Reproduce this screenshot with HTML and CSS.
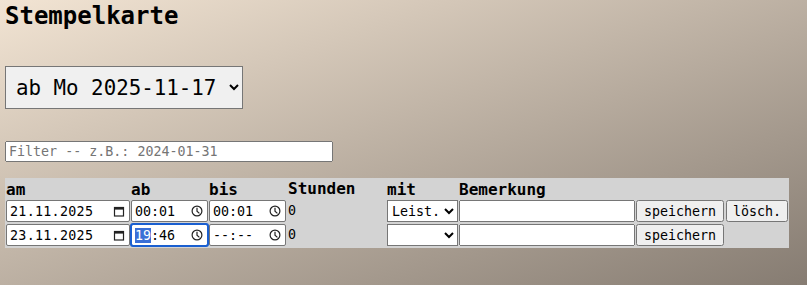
FILE: index.html
```html
<!DOCTYPE html>
<html lang="de">
<head>
    <meta charset="UTF-8">
    <meta name="viewport" content="width=device-width, initial-scale=1.0">
    <title>Stempelkarte</title>
    <link rel="stylesheet" href="styles.css">
</head>
<body>
    <h1>Stempelkarte</h1>
    <select class="woche">
        <option>ab Mo 2025-11-17</option>
    </select>
    <div class="filter">
        <input type="text" class="filter-input" placeholder="Filter -- z.B.: 2024-01-31">
    </div>
    <table class="stempel">
        <tr>
            <th>am</th>
            <th>ab</th>
            <th>bis</th>
            <th class="stunden">Stunden</th>
            <th>mit</th>
            <th>Bemerkung</th>
            <th></th>
            <th class="last"></th>
        </tr>
        <tr>
            <td>
                <span class="field datum">
                    <span class="wert">21.11.2025</span>
                    <svg class="icon" viewBox="0 0 12 12"><rect x="1.5" y="2.5" width="9" height="8.5" fill="none" stroke="#222" stroke-width="1.2"/><rect x="1" y="2" width="10" height="2.6" fill="#222"/></svg>
                </span>
            </td>
            <td>
                <span class="field zeit">
                    <span class="wert">00:01</span>
                    <svg class="icon" viewBox="0 0 12 12"><circle cx="6" cy="6" r="4.9" fill="none" stroke="#222" stroke-width="1.2"/><path d="M6 2.8V6.3L8.4 8.4" fill="none" stroke="#222" stroke-width="1.2"/></svg>
                </span>
            </td>
            <td>
                <span class="field zeit">
                    <span class="wert">00:01</span>
                    <svg class="icon" viewBox="0 0 12 12"><circle cx="6" cy="6" r="4.9" fill="none" stroke="#222" stroke-width="1.2"/><path d="M6 2.8V6.3L8.4 8.4" fill="none" stroke="#222" stroke-width="1.2"/></svg>
                </span>
            </td>
            <td class="stunden">0</td>
            <td><select class="mit"><option>Leist.</option></select></td>
            <td><input type="text" class="bemerkung"></td>
            <td><button>speichern</button></td>
            <td class="last"><button class="loesch">lösch.</button></td>
        </tr>
        <tr>
            <td>
                <span class="field datum">
                    <span class="wert">23.11.2025</span>
                    <svg class="icon" viewBox="0 0 12 12"><rect x="1.5" y="2.5" width="9" height="8.5" fill="none" stroke="#222" stroke-width="1.2"/><rect x="1" y="2" width="10" height="2.6" fill="#222"/></svg>
                </span>
            </td>
            <td>
                <span class="field zeit aktiv">
                    <span class="wert"><span class="markiert">19</span>:46</span>
                    <svg class="icon" viewBox="0 0 12 12"><circle cx="6" cy="6" r="4.9" fill="none" stroke="#222" stroke-width="1.2"/><path d="M6 2.8V6.3L8.4 8.4" fill="none" stroke="#222" stroke-width="1.2"/></svg>
                </span>
            </td>
            <td>
                <span class="field zeit">
                    <span class="wert">--:--</span>
                    <svg class="icon" viewBox="0 0 12 12"><circle cx="6" cy="6" r="4.9" fill="none" stroke="#222" stroke-width="1.2"/><path d="M6 2.8V6.3L8.4 8.4" fill="none" stroke="#222" stroke-width="1.2"/></svg>
                </span>
            </td>
            <td class="stunden">0</td>
            <td><select class="mit"><option></option><option>Leist.</option></select></td>
            <td><input type="text" class="bemerkung"></td>
            <td><button>speichern</button></td>
            <td class="last"></td>
        </tr>
    </table>
</body>
</html>
```

FILE: styles.css
```css
/* Seite */
html {
    min-height: 100%;
    background: linear-gradient(to bottom right, #f2e4d3, #867c72);
}

body {
    margin: 0;
    padding: 0 5px;
    font-family: 'DejaVu Sans Mono', monospace;
    color: black;
}

h1 {
    font-size: 24px;
    margin: 0;
    padding-top: 4px;
    line-height: 24px;
}

input, select, button {
    font-family: 'DejaVu Sans Mono', monospace;
    font-size: 13.333px;
}

.woche {
    margin-top: 38px;
    font-size: 20.8px;
    padding: 7px 9px 7px 6px;
    height: 43px;
    background-color: #f0f0f0;
    border: 1px solid #767676;
}

.filter {
    margin-top: 32px;
}

.filter-input {
    width: 328px;
    box-sizing: border-box;
    margin: 0;
}

/* Tabelle */
.stempel {
    margin-top: 16px;
    border-collapse: separate;
    border-spacing: 0;
    background-color: lightgray;
}

.stempel th {
    text-align: left;
    font-size: 16px;
    padding: 0 0 0 1px;
    height: 21px;
    line-height: 21px;
}

.stempel td {
    padding: 0 0 2px 1px;
    font-size: 13.333px;
    vertical-align: top;
}

.stempel .stunden {
    width: 98px;
    padding-left: 2px;
    line-height: 22px;
}

.stempel .last {
    padding-right: 1px;
    padding-left: 2px;
}

/* nachgebaute Datum- und Zeitfelder */
.field {
    display: flex;
    align-items: center;
    box-sizing: border-box;
    height: 22px;
    background-color: white;
    border: 1px solid #767676;
    border-radius: 2px;
    padding: 0 4px 0 3px;
}

.field .wert {
    flex: 1;
    line-height: 15px;
}

.datum {
    width: 124px;
}

.datum .wert {
    letter-spacing: 0.3px;
}

.zeit {
    width: 77px;
}

.icon {
    width: 12px;
    height: 12px;
}

.aktiv {
    outline: 2px solid #1a5fd0;
    outline-offset: -1px;
    border-color: #1a5fd0;
}

.markiert {
    background-color: #3a6fd6;
    color: white;
    display: inline-block;
}

.mit {
    width: 71px;
    height: 22px;
    background-color: white;
    display: block;
}

.bemerkung {
    width: 176px;
    height: 22px;
    box-sizing: border-box;
    margin: 0;
    display: block;
}

.stempel button {
    height: 22px;
    width: 88px;
    padding: 0;
    display: block;
}

.stempel .loesch {
    width: 62px;
}
```
